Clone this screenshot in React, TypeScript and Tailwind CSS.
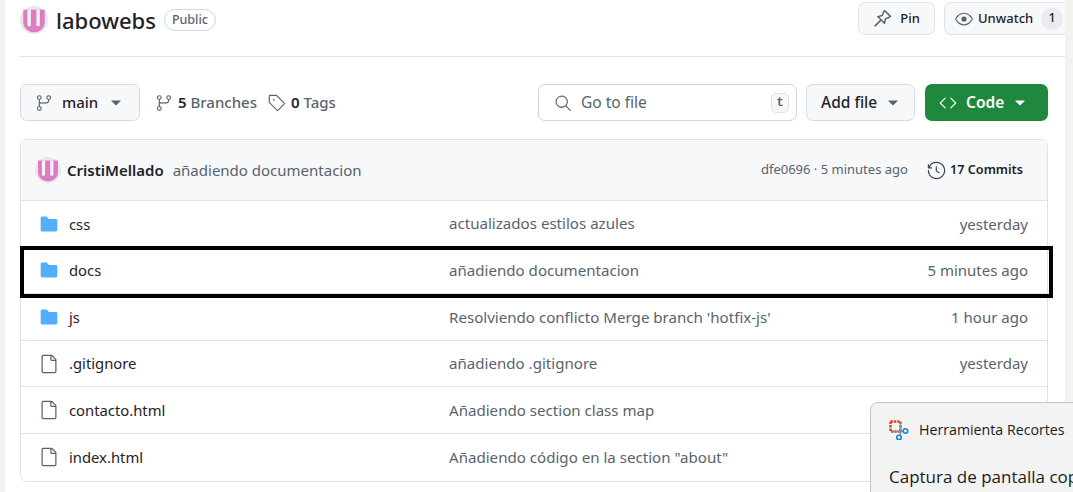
import { GoCode, GoEye, GoFile, GoFileDirectoryFill, GoGitBranch, GoHistory, GoSearch, GoTag, GoTriangleDown } from 'react-icons/go';

const rows = [
  { name: 'css', dir: true, msg: 'actualizados estilos azules', when: 'yesterday' },
  { name: 'docs', dir: true, msg: 'añadiendo documentacion', when: '5 minutes ago' },
  { name: 'js', dir: true, msg: "Resolviendo conflicto Merge branch 'hotfix-js'", when: '1 hour ago' },
  { name: '.gitignore', dir: false, msg: 'añadiendo .gitignore', when: 'yesterday' },
  { name: 'contacto.html', dir: false, msg: 'Añadiendo section class map', when: '' },
  { name: 'index.html', dir: false, msg: 'Añadiendo código en la section "about"', when: '' },
];

function Avatar({ size }: { size: string }) {
  return (
    <svg viewBox="0 0 30 30" className={size}>
      <circle cx="15" cy="15" r="15" fill="#e9e5e8" />
      <path d="M3.5 4 H26.5 V18 A11.5 10 0 0 1 3.5 18 Z" fill="#dc7cc3" />
      <rect x="8" y="4" width="3.6" height="17.5" fill="#f8f2f6" />
      <rect x="17.6" y="4" width="3.6" height="17.5" fill="#f8f2f6" />
    </svg>
  );
}

export default function App() {
  return (
    <div className="relative flex h-[492px] w-[1073px] overflow-hidden bg-[#f3f2ee] font-['Noto_Sans',sans-serif] text-[#1f2328]">
      <div className="ml-[5px] w-[1060px] bg-white pl-[15px]">
        <div className="flex h-[57px] items-start border-b border-[#dfe3e9]">
          <Avatar size="mt-[5px] h-[30px] w-[28px]" />
          <span className="ml-[8px] mt-[4px] text-[22px] font-medium leading-[32px]">labowebs</span>
          <span className="ml-[8px] mt-[9px] rounded-full border border-[#d0d7de] px-[7px] text-[12.5px] font-medium leading-[20px] text-[#59636e]">Public</span>
          <div className="ml-auto mt-[2px] flex gap-[9px]">
            <button className="flex h-[33px] w-[77px] items-center justify-center gap-[8px] rounded-[7px] border border-[#dfe3e9] bg-[#f6f8fa] text-[13px] font-medium">
              <svg viewBox="0 0 18 18" className="h-[19px] w-[19px] text-[#59636e]" fill="none" stroke="currentColor" strokeWidth="1.4" strokeLinejoin="round" strokeLinecap="round">
                <path d="M11 1.5 L16.5 7 L15 8 L11.8 9.3 L10.8 13.5 L4.5 7.2 L8.7 6.2 L10 3 Z" />
                <path d="M7 11 L2 16" />
              </svg>
              Pin
            </button>
            <button className="flex h-[33px] w-[121px] items-center gap-[5px] rounded-l-[7px] border border-r-0 border-[#dfe3e9] bg-[#f6f8fa] pl-[10px] text-[13px] font-medium">
              <GoEye className="h-[18px] w-[18px] text-[#59636e]" />
              Unwatch
              <span className="ml-[3px] flex h-[22px] w-[22px] items-center justify-center rounded-full bg-[#e8ebef] text-[12.5px]">1</span>
            </button>
          </div>
        </div>

        <div className="mt-[27px] flex h-[37px] w-[1028px] items-center">
          <button className="flex h-[37px] w-[120px] items-center rounded-[7px] border border-[#d5dbe2] bg-[#f6f8fa] pl-[14px] text-[15px] font-medium">
            <GoGitBranch className="h-[18px] w-[18px] text-[#59636e]" />
            <span className="ml-[9px]">main</span>
            <GoTriangleDown className="ml-[9px] h-[18px] w-[18px] text-[#59636e]" />
          </button>
          <GoGitBranch className="ml-[15px] h-[18px] w-[18px] text-[#59636e]" />
          <span className="ml-[5px] text-[15px] font-medium text-[#59636e]"><b className="font-semibold text-[#1f2328]">5</b> Branches</span>
          <GoTag className="ml-[11px] h-[18px] w-[18px] text-[#59636e]" />
          <span className="ml-[5px] text-[15px] font-medium text-[#59636e]"><b className="font-semibold text-[#1f2328]">0</b> Tags</span>

          <div className="ml-auto flex h-[37px] w-[259px] items-center rounded-[7px] border border-[#ccd4dc] pl-[15px] pr-[7px]">
            <GoSearch className="h-[18px] w-[18px] text-[#59636e]" />
            <span className="ml-[9px] text-[15.5px] text-[#59636e]">Go to file</span>
            <span className="ml-auto flex h-[20px] w-[18px] items-center justify-center rounded-[5px] border border-[#dfe3e9] bg-[#f6f8fa] font-['Liberation_Mono',monospace] text-[12px] font-bold text-[#59636e]">t</span>
          </div>
          <button className="ml-[9px] flex h-[37px] w-[109px] items-center rounded-[7px] border border-[#d5dbe2] bg-[#f6f8fa] pl-[14px] text-[15.5px] font-medium">
            Add file
            <GoTriangleDown className="ml-[7px] h-[18px] w-[18px] text-[#59636e]" />
          </button>
          <button className="ml-[10px] flex h-[37px] w-[123px] items-center rounded-[7px] bg-[#1f883d] pl-[14px] text-[15.5px] font-semibold text-white">
            <GoCode className="h-[18px] w-[18px]" />
            <span className="ml-[9px]">Code</span>
            <GoTriangleDown className="ml-[7px] h-[18px] w-[18px]" />
          </button>
        </div>

        <div className="mt-[18px] w-[1028px] overflow-hidden rounded-[7px] border border-[#dfe3e9]">
          <div className="flex h-[61px] items-center border-b border-[#dfe3e9] bg-[#f6f8fa] pl-[14px] pr-[24px]">
            <Avatar size="h-[26px] w-[26px]" />
            <span className="ml-[6px] text-[15px] font-semibold">CristiMellado</span>
            <span className="ml-[9px] text-[15px] text-[#59636e]">añadiendo documentacion</span>
            <span className="ml-auto text-[13px] text-[#59636e]">dfe0696 · 5 minutes ago</span>
            <GoHistory className="ml-[19px] h-[19px] w-[19px] text-[#3d444d]" />
            <span className="ml-[4px] text-[12.7px] font-semibold">17 Commits</span>
          </div>
          {rows.map((row) => (
            <div key={row.name} className="flex h-[46.6px] items-center border-b border-[#dfe3e9] pl-[18px] pr-[19px] last:border-b-0">
              {row.dir ? (
                <GoFileDirectoryFill className="h-[20px] w-[20px] text-[#54aeff]" />
              ) : (
                <GoFile className="h-[20px] w-[20px] text-[#59636e]" />
              )}
              <span className="ml-[10px] w-[380px] text-[14.8px]">{row.name}</span>
              <span className="text-[15.1px] text-[#59636e]">{row.msg}</span>
              <span className="ml-auto text-[15px] text-[#59636e]">{row.when}</span>
            </div>
          ))}
        </div>
      </div>

      {/* annotation drawn over the screenshot */}
      <div className="absolute left-[20px] top-[246px] h-[52px] w-[1033px] border-[4px] border-black" />

      {/* snipping tool toast */}
      <div className="absolute left-[870px] top-[402px] h-[110px] w-[240px] rounded-[8px] border border-[#c4c4c4] bg-[#f3f3f3] pl-[18px] pt-[17px] font-['Open_Sans',sans-serif]">
        <div className="flex items-center">
          <svg viewBox="0 0 20 20" className="h-[20px] w-[20px]">
            <rect x="1.5" y="1.5" width="10" height="10" fill="none" stroke="#d9481c" strokeWidth="2.4" strokeDasharray="2.4 1" />
            <path d="M11.5 3 V15 M3 11.5 H15" fill="none" stroke="#8f8f8f" strokeWidth="1.4" />
            <circle cx="16.5" cy="11" r="2.2" fill="#fff" stroke="#0a84d8" strokeWidth="1.6" />
            <circle cx="10" cy="17.5" r="2.2" fill="#fff" stroke="#0a84d8" strokeWidth="1.6" />
          </svg>
          <span className="ml-[10px] text-[14.2px] leading-[20px] text-[#1b1b1b]">Herramienta Recortes</span>
        </div>
        <div className="mt-[25px] whitespace-nowrap text-[17px] leading-[24px] text-[#1b1b1b]">Captura de pantalla copiada</div>
      </div>
    </div>
  );
}
